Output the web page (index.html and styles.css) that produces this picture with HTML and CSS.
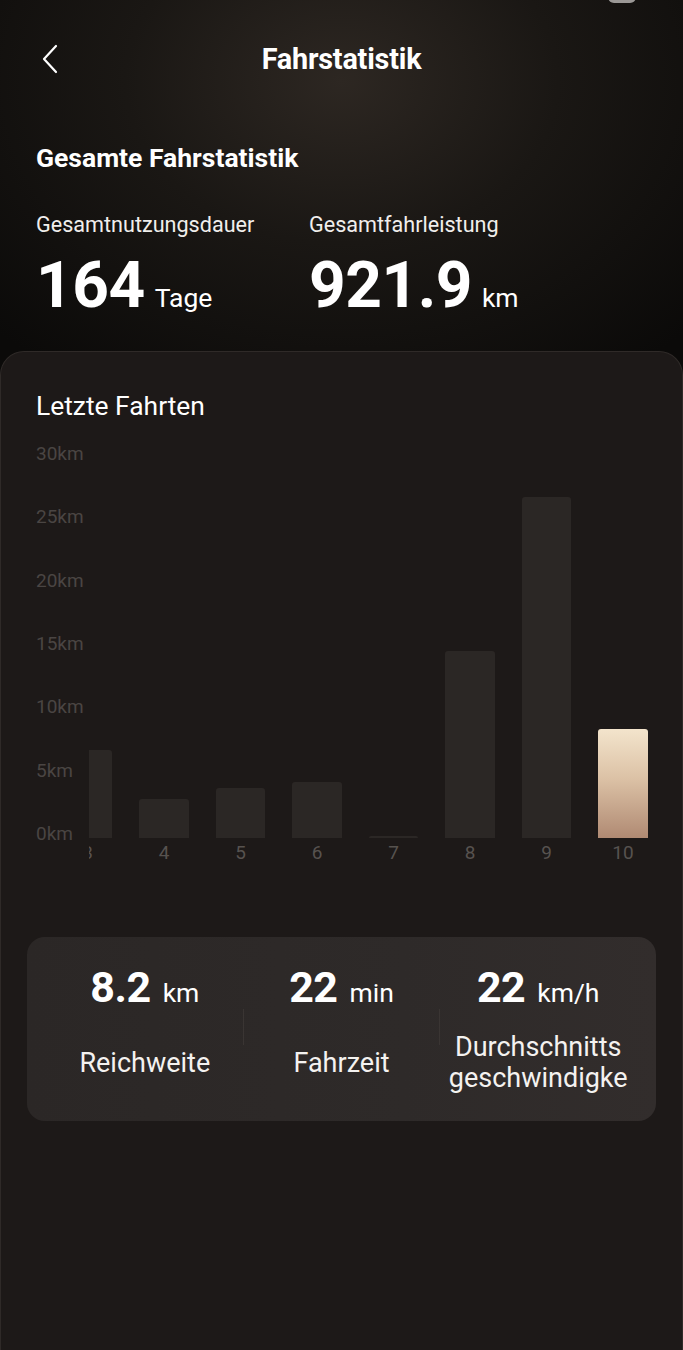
FILE: index.html
```html
<!DOCTYPE html>
<html lang="de">
<head>
<meta charset="utf-8">
<title>Fahrstatistik</title>
<link rel="stylesheet" href="styles.css">
</head>
<body>
<div class="page">
  <div class="notch"></div>
  <section class="top">
    <header class="appbar">
      <svg class="back" width="18" height="30" viewBox="0 0 18 30"><path d="M15 2 L3 15 L15 28" fill="none" stroke="#fff" stroke-width="2.2" stroke-linecap="round" stroke-linejoin="round"/></svg>
      <h1 class="title">Fahrstatistik</h1>
    </header>
    <h2 class="section-title">Gesamte Fahrstatistik</h2>
    <div class="totals">
      <div class="total">
        <div class="total-label">Gesamtnutzungsdauer</div>
        <div class="total-value"><span class="big">164</span><span class="unit">Tage</span></div>
      </div>
      <div class="total">
        <div class="total-label">Gesamtfahrleistung</div>
        <div class="total-value"><span class="big">921.9</span><span class="unit">km</span></div>
      </div>
    </div>
  </section>

  <section class="card">
    <h3 class="card-title">Letzte Fahrten</h3>
    <div class="chart">
      <div class="yaxis">
        <span>30km</span><span>25km</span><span>20km</span><span>15km</span><span>10km</span><span>5km</span><span>0km</span>
      </div>
      <div class="plot">
        <div class="slots">
          <div class="slot"><div class="bar-area"><div class="bar" style="height:88px"></div></div><span class="xl">3</span></div>
          <div class="slot"><div class="bar-area"><div class="bar" style="height:39px"></div></div><span class="xl">4</span></div>
          <div class="slot"><div class="bar-area"><div class="bar" style="height:50px"></div></div><span class="xl">5</span></div>
          <div class="slot"><div class="bar-area"><div class="bar" style="height:56px"></div></div><span class="xl">6</span></div>
          <div class="slot"><div class="bar-area"><div class="bar" style="height:2px"></div></div><span class="xl">7</span></div>
          <div class="slot"><div class="bar-area"><div class="bar" style="height:187px"></div></div><span class="xl">8</span></div>
          <div class="slot"><div class="bar-area"><div class="bar" style="height:341px"></div></div><span class="xl">9</span></div>
          <div class="slot"><div class="bar-area"><div class="bar active" style="height:109px"></div></div><span class="xl">10</span></div>
        </div>
      </div>
    </div>

    <div class="stats">
      <div class="stat">
        <div class="stat-value"><span class="num">8.2</span><span class="su">km</span></div>
        <div class="stat-label"><span>Reichweite</span></div>
      </div>
      <div class="divider"></div>
      <div class="stat">
        <div class="stat-value"><span class="num">22</span><span class="su">min</span></div>
        <div class="stat-label"><span>Fahrzeit</span></div>
      </div>
      <div class="divider"></div>
      <div class="stat">
        <div class="stat-value"><span class="num">22</span><span class="su">km/h</span></div>
        <div class="stat-label"><span>Durchschnitts</span><span>geschwindigke</span></div>
      </div>
    </div>
  </section>
</div>
</body>
</html>
```

FILE: styles.css
```css
* { box-sizing: border-box; margin: 0; padding: 0; }

html, body {
  background: #0b0a09;
}

body {
  font-family: Roboto, "Noto Sans", "Liberation Sans", sans-serif;
  color: #fff;
}

.page {
  position: relative;
  width: 683px;
  min-height: 1350px;
  display: flex;
  flex-direction: column;
  background: radial-gradient(ellipse 480px 360px at 50% 6%, #2d2722 0%, #1a1714 45%, #0b0a09 100%);
}

.notch {
  position: absolute;
  top: -10px;
  left: 608px;
  width: 28px;
  height: 13px;
  border-radius: 6px;
  background: #9b9896;
}

.top {
  padding: 0 0 0 36px;
  height: 351px;
}

.appbar {
  position: relative;
  height: 118px;
  display: flex;
  align-items: center;
  justify-content: center;
  margin-left: -36px;
}

.back {
  position: absolute;
  left: 41px;
  top: 44px;
}

.title {
  font-size: 28.8px;
  font-weight: 700;
  letter-spacing: -0.2px;
}

.section-title {
  margin-top: 25px;
  font-size: 26.5px;
  line-height: 30px;
  font-weight: 700;
}

.totals {
  margin-top: 40px;
  display: grid;
  grid-template-columns: 273px auto;
}

.total-label {
  font-size: 21.6px;
  line-height: 24px;
  color: #f0eeec;
}

.total-value {
  margin-top: 17px;
  display: flex;
  align-items: baseline;
  gap: 10px;
  line-height: 64px;
}

.big {
  font-size: 64px;
  font-weight: 700;
  letter-spacing: -0.5px;
}

.unit {
  font-size: 26.5px;
  line-height: 30px;
}

.card {
  flex: 1;
  background: #1d1918;
  border: 1px solid #2f2a28;
  border-bottom: none;
  border-radius: 24px 24px 0 0;
  padding: 39px 0 40px 0;
}

.card-title {
  padding-left: 35px;
  font-size: 26.4px;
  line-height: 30px;
  font-weight: 400;
}

.chart {
  margin-top: 23px;
  display: flex;
}

.yaxis {
  width: 88px;
  padding-left: 35px;
  height: 400px;
  display: flex;
  flex-direction: column;
  justify-content: space-between;
  font-size: 19px;
  line-height: 20px;
  color: #4a4543;
}

.plot {
  width: 580px;
  overflow: hidden;
}

.slots {
  display: flex;
  margin-left: -39.75px;
}

.slot {
  flex: 0 0 76.5px;
  display: flex;
  flex-direction: column;
  align-items: center;
}

.bar-area {
  height: 394px;
  width: 100%;
  display: flex;
  align-items: flex-end;
  justify-content: center;
}

.bar {
  width: 49.5px;
  background: #2b2725;
  border-radius: 3px 3px 0 0;
}

.bar.active {
  background: linear-gradient(180deg, #f3e4cc 0%, #dcc2a6 45%, #b08a73 100%);
}

.xl {
  margin-top: 5px;
  font-size: 19px;
  line-height: 20px;
  color: #57524f;
}

.stats {
  margin: 74px 26px 0 26px;
  padding: 26px 20px 27px 20px;
  border-radius: 18px;
  background: linear-gradient(90deg, #2b2726 0%, #2e2a29 60%, #322d2c 100%);
  display: flex;
}

.stat {
  flex: 1;
  display: flex;
  flex-direction: column;
  align-items: center;
}

.divider {
  width: 1px;
  height: 36px;
  margin-top: 46px;
  background: #3a3533;
}

.stat-value {
  height: 48px;
  display: flex;
  align-items: baseline;
  gap: 12px;
  line-height: 48px;
}

.num {
  font-size: 43px;
  font-weight: 700;
  letter-spacing: -0.5px;
}

.su {
  font-size: 26.5px;
  line-height: 1;
}

.stat-label {
  margin-top: 21px;
  height: 62px;
  display: flex;
  flex-direction: column;
  justify-content: center;
  align-items: center;
  font-size: 27px;
  line-height: 31px;
  color: #f4f2f0;
  white-space: nowrap;
}
```
